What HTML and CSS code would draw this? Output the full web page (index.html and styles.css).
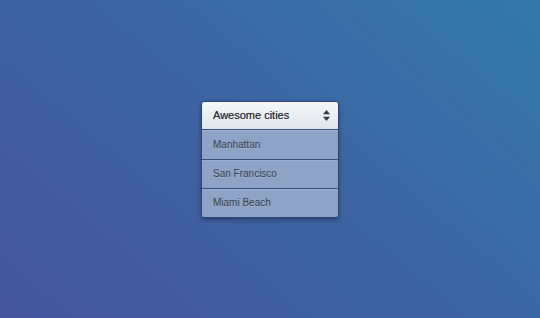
FILE: index.html
```html
<!DOCTYPE html>
<html lang="en">

<head>
    <meta charset="UTF-8">
    <meta name="viewport" content="width=device-width, initial-scale=1.0">
    <title>Awesome cities</title>
    <link rel="stylesheet" href="styles.css">
</head>

<body>
    <div class="dropdown">
        <div class="dropdown-head">
            <span>Awesome cities</span>
            <svg class="arrows" width="7" height="11" viewBox="0 0 7 11">
                <path d="M3.5 0 L7 4.2 L0 4.2 Z" fill="#353a42" />
                <path d="M3.5 11 L7 6.8 L0 6.8 Z" fill="#353a42" />
            </svg>
        </div>
        <ul class="dropdown-list">
            <li>Manhattan</li>
            <li>San Francisco</li>
            <li>Miami Beach</li>
        </ul>
    </div>
</body>

</html>
```

FILE: styles.css
```css
* {
    margin: 0;
    padding: 0;
    box-sizing: border-box;
}

ul,
li {
    list-style: none;
}

body {
    width: 540px;
    height: 318px;
    display: flex;
    justify-content: center;
    align-items: center;
    font-family: "Liberation Sans", Arial, sans-serif;
    background: linear-gradient(40deg, #45559c 0%, #3d64a2 50%, #3379a8 100%);
}

.dropdown {
    width: 138px;
    border-radius: 3px;
    border: 1px solid #2e4472;
    box-shadow: 0 2px 4px rgba(15, 30, 70, 0.45);
    overflow: hidden;
}

.dropdown-head {
    height: 28px;
    padding: 0 8px 0 11px;
    display: flex;
    justify-content: space-between;
    align-items: center;
    font-size: 11px;
    color: #262a31;
    text-shadow: 0 0 0.4px rgba(30, 34, 40, 0.6);
    background: linear-gradient(#f5f7fa, #dfe5ec);
    border-bottom: 1px solid #3b4f74;
}

.dropdown-list li {
    height: 29px;
    padding-left: 11px;
    display: flex;
    align-items: center;
    font-size: 10px;
    color: #333d4d;
    text-shadow: 0 1px 0 rgba(255, 255, 255, 0.2);
    background: #8ea3c6;
    border-top: 1px solid #9fb2d2;
}

.dropdown-list li + li {
    border-top: 1px solid #3d5077;
    box-shadow: inset 0 1px 0 #9db0d0;
}
```
